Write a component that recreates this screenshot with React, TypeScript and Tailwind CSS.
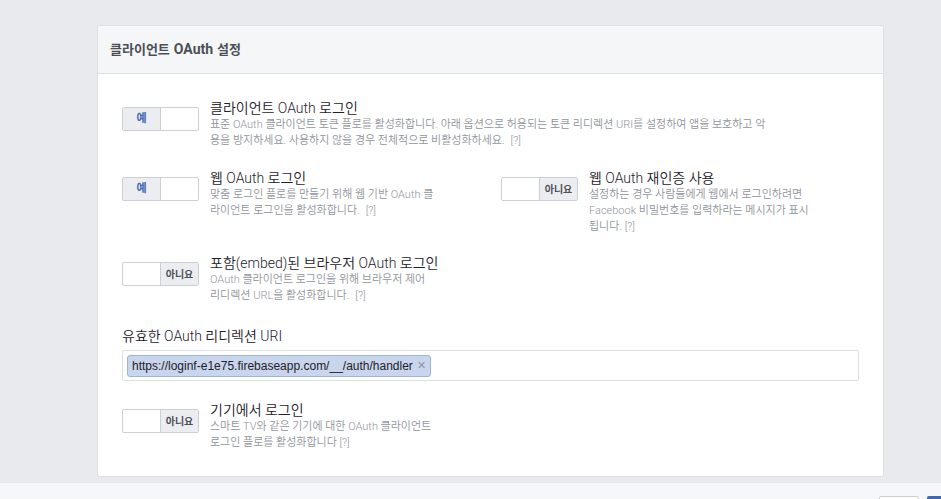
import type { ReactNode } from 'react'

const font = { fontFamily: 'Roboto, "Noto Sans CJK KR", sans-serif' }

function Toggle({ on }: { on: boolean }) {
  return (
    <div className="mt-[8px] flex h-[24px] w-[77px] shrink-0 overflow-hidden rounded-[2px] border border-[#ccd0d5] bg-white">
      {on ? (
        <>
          <div className="flex w-[38px] items-center justify-center border-r border-[#ccd0d5] bg-[#ebedf0] text-[11px] font-bold text-[#4267b2]">
            예
          </div>
          <div className="flex-1" />
        </>
      ) : (
        <>
          <div className="flex-1" />
          <div className="flex w-[38px] items-center justify-center border-l border-[#ccd0d5] bg-[#ebedf0] text-[10px] font-bold text-[#4b4f56]">
            아니요
          </div>
        </>
      )}
    </div>
  )
}

function Setting({ on, title, lines }: { on: boolean; title: string; lines: ReactNode[] }) {
  return (
    <div className="flex gap-[11px]">
      <Toggle on={on} />
      <div>
        <div className="text-[14px] leading-[18px] font-[350] text-[#1d2129]">{title}</div>
        <div className="text-[11px] leading-[16px] font-[350] whitespace-nowrap text-[#90949c]">
          {lines.map((l, i) => (
            <div key={i}>{l}</div>
          ))}
        </div>
      </div>
    </div>
  )
}

const q = <span className="ml-[6px]">[?]</span>

export default function App() {
  return (
    <div className="h-[499px] overflow-hidden bg-[#e9eaed]" style={font}>
      <div className="pt-[25px] pl-[97px]">
        <div className="w-[787px] overflow-hidden rounded-[3px] border border-[#dddfe2] bg-white">
          <div className="flex h-[48px] items-center border-b border-[#dddfe2] bg-[#f5f6f7] px-[12px] font-bold text-[#4b4f56]">
            <span className="text-[13px]">클라이언트</span>
            <span className="ml-[4px] text-[14px]">OAuth</span>
            <span className="ml-[4px] text-[13px]">설정</span>
          </div>

          <div className="flex flex-col px-[24px] pt-[25px] pb-[25px]">
            <Setting
              on
              title="클라이언트 OAuth 로그인"
              lines={[
                '표준 OAuth 클라이언트 토큰 플로를 활성화합니다. 아래 옵션으로 허용되는 토큰 리디렉션 URI를 설정하여 앱을 보호하고 악',
                <>용을 방지하세요. 사용하지 않을 경우 전체적으로 비활성화하세요.{q}</>,
              ]}
            />

            <div className="mt-[20px] grid grid-cols-[379px_1fr]">
              <Setting
                on
                title="웹 OAuth 로그인"
                lines={['맞춤 로그인 플로를 만들기 위해 웹 기반 OAuth 클', <>라이언트 로그인을 활성화합니다.{q}</>]}
              />
              <Setting
                on={false}
                title="웹 OAuth 재인증 사용"
                lines={[
                  '설정하는 경우 사람들에게 웹에서 로그인하려면',
                  'Facebook 비밀번호를 입력하라는 메시지가 표시',
                  '됩니다. [?]',
                ]}
              />
            </div>

            <div className="mt-[19px]">
              <Setting
                on={false}
                title="포함(embed)된 브라우저 OAuth 로그인"
                lines={['OAuth 클라이언트 로그인을 위해 브라우저 제어', <>리디렉션 URL을 활성화합니다.{q}</>]}
              />
            </div>

            <div className="mt-[23px] text-[14px] leading-[18px] font-[350] text-[#1d2129]">유효한 OAuth 리디렉션 URI</div>
            <div className="mt-[5px] flex h-[31px] items-center rounded-[2px] border border-[#dddfe2] bg-white px-[4px]">
              <div
                className="flex h-[22px] items-center gap-[4px] rounded-[3px] border border-[#9cb4d8] bg-[#c9d5ec] pr-[4px] pl-[4px] text-[12px] text-[#1d2129]"
                style={{ fontFamily: '"Liberation Sans", sans-serif' }}
              >
                https://loginf-e1e75.firebaseapp.com/__/auth/handler
                <span className="text-[11px] text-[#8d949e]">✕</span>
              </div>
            </div>

            <div className="mt-[20px]">
              <Setting
                on={false}
                title="기기에서 로그인"
                lines={['스마트 TV와 같은 기기에 대한 OAuth 클라이언트', '로그인 플로를 활성화합니다 [?]']}
              />
            </div>
          </div>
        </div>
      </div>

      <div className="mt-[5px] flex h-[40px] justify-end gap-[8px] border-t border-[#e5e6e9] bg-[#f6f7f9] pt-[13px]">
        <div className="h-[24px] w-[40px] rounded-[2px] border border-[#ccd0d5] bg-white" />
        <div className="h-[24px] w-[14px] rounded-l-[2px] bg-[#4267b2]" />
      </div>
    </div>
  )
}
